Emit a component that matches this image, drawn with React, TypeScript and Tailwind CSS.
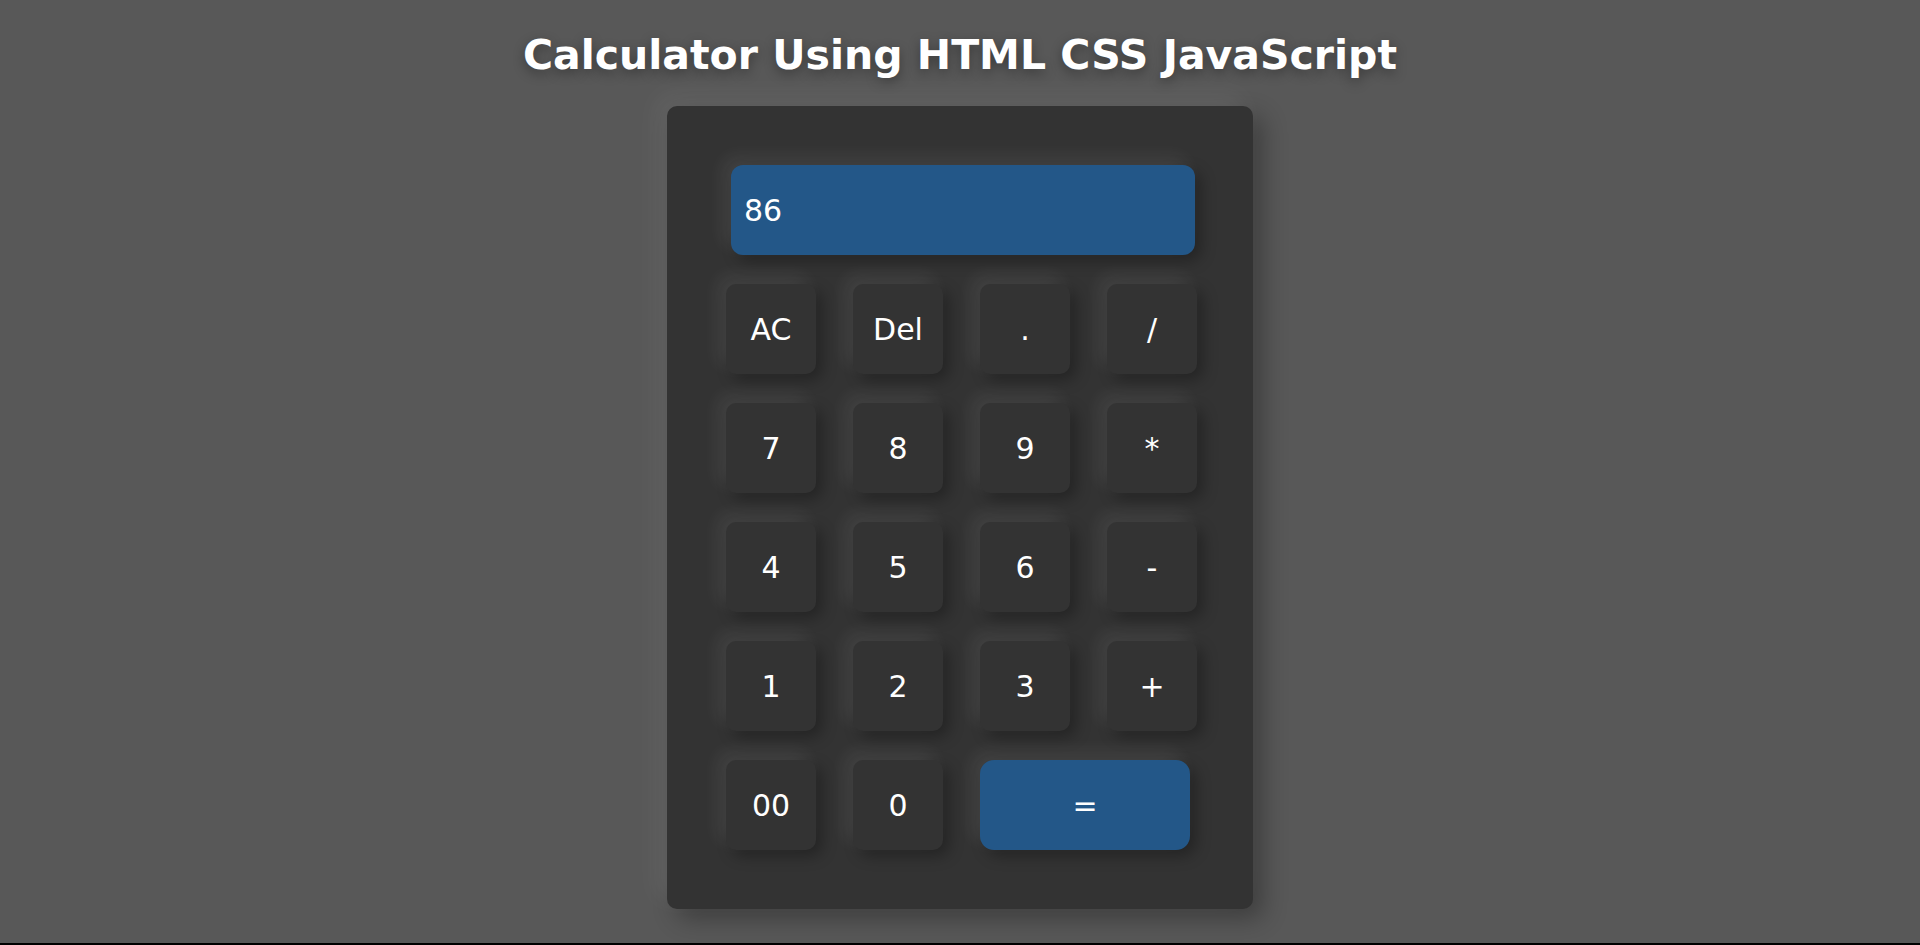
const keys: { label: string; wide?: boolean }[] = [
  { label: "AC" },
  { label: "Del" },
  { label: "." },
  { label: "/" },
  { label: "7" },
  { label: "8" },
  { label: "9" },
  { label: "*" },
  { label: "4" },
  { label: "5" },
  { label: "6" },
  { label: "-" },
  { label: "1" },
  { label: "2" },
  { label: "3" },
  { label: "+" },
  { label: "00" },
  { label: "0" },
  { label: "=", wide: true },
];

export default function App() {
  return (
    <main className="h-[945px] box-border border-b-2 border-black bg-[#585858] flex flex-col items-center pt-[31px] font-['DejaVu_Sans','Verdana',sans-serif] text-white">
      <h1 className="text-[41px] leading-[48px] font-bold [text-shadow:0_4px_12px_rgba(0,0,0,0.35)]">
        Calculator Using HTML CSS JavaScript
      </h1>

      <section className="mt-[27px] w-[586px] h-[803px] rounded-[10px] bg-[#333333] pt-[59px] pl-[59px] shadow-[-10px_-10px_25px_rgba(255,255,255,0.07),10px_10px_25px_rgba(0,0,0,0.3)]">
        <div className="ml-[5px] w-[464px] h-[90px] rounded-[12px] bg-[#235788] flex items-center pl-[13px] text-[30px] shadow-[-8px_-8px_18px_rgba(255,255,255,0.08),6px_6px_15px_rgba(0,0,0,0.3)]">
          86
        </div>

        <div className="mt-[29px] grid grid-cols-[repeat(4,90px)] gap-x-[37px] gap-y-[29px]">
          {keys.map((k) => (
            <button
              key={k.label}
              className={
                k.wide
                  ? "col-span-2 w-[210px] h-[90px] rounded-[14px] bg-[#235788] text-[30px] flex items-center justify-center shadow-[-8px_-8px_18px_rgba(255,255,255,0.08),6px_6px_15px_rgba(0,0,0,0.3)]"
                  : "w-[90px] h-[90px] rounded-[10px] bg-[#333333] text-[30px] flex items-center justify-center shadow-[-8px_-8px_18px_rgba(255,255,255,0.08),6px_6px_15px_rgba(0,0,0,0.3)]"
              }
            >
              {k.label}
            </button>
          ))}
        </div>
      </section>
    </main>
  );
}
